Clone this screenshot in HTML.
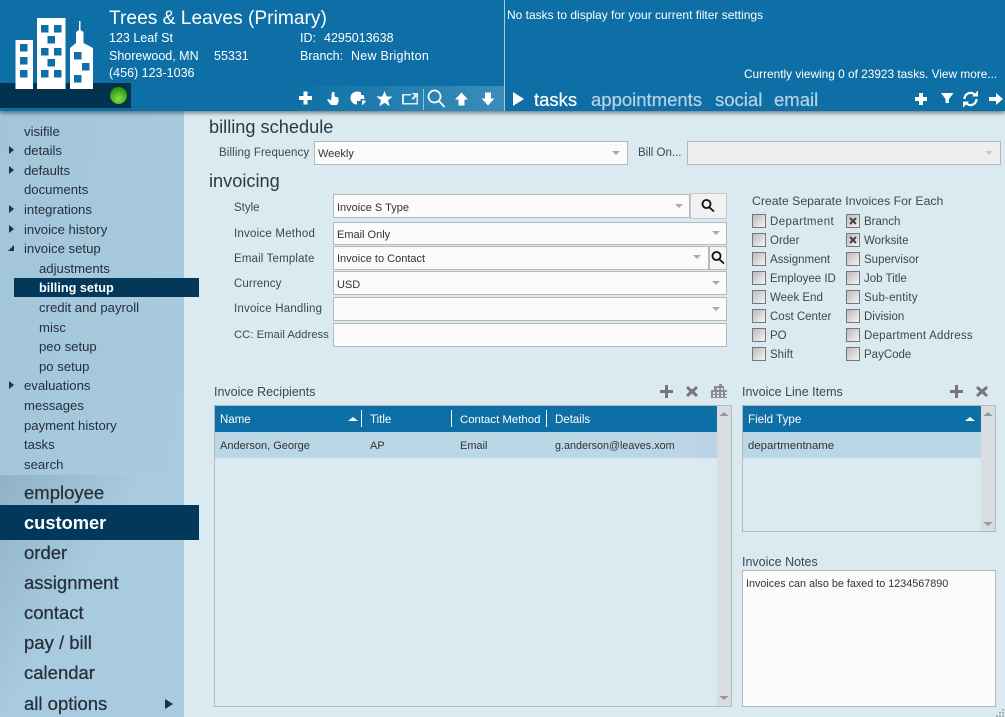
<!DOCTYPE html>
<html><head><meta charset="utf-8"><style>
html,body{margin:0;padding:0}
body{width:1005px;height:717px;overflow:hidden;position:relative;background:#dbe9f1;font-family:"Liberation Sans",sans-serif;color:#333}
div,span,svg{position:absolute}
.t{white-space:nowrap;line-height:16px;font-size:11.5px;color:#333}
.w{color:#fff;font-size:12.5px}
.m{color:#24303a;font-size:13.15px;left:24px}
.s{left:39px}
.b{color:#25303a;font-size:18.5px;left:24px;line-height:24px;-webkit-text-stroke:.25px #25303a}
.ar{left:9px;width:0;height:0;border-left:5px solid #25303a;border-top:4.5px solid transparent;border-bottom:4.5px solid transparent}
.h{font-size:18.2px;color:#2c3a44}
.in{background:#fbfbfb;border:1px solid #b5b9bb;box-sizing:border-box}
.ca{width:0;height:0;border-top:4px solid #aaa;border-left:4.5px solid transparent;border-right:4.5px solid transparent}
.cb{width:14px;height:14px;box-sizing:border-box;border:1px solid #777;background:linear-gradient(135deg,#bbb,#f4f4f4)}
.l{color:#3c4850;font-size:11.5px}
.x{color:#333;font-size:11px}
.tab{font-size:18.5px;color:#b9d3e2;line-height:24px;white-space:nowrap;-webkit-text-stroke:.2px currentColor}
</style></head><body>
<!-- sidebar -->
<div style="left:0;top:111px;width:184px;height:606px;background:linear-gradient(100deg,#a2c5da,#a9cce0)"></div>
<div style="left:0;top:475px;width:184px;height:242px;background:linear-gradient(120deg,#8fb2c6 0,#a9cbdf 45%)"></div>
<!-- header -->
<div style="left:0;top:0;width:1005px;height:111px;background:#0d6fa5;box-shadow:0 2px 4px rgba(40,50,60,.6)"></div>
<div style="left:0;top:83px;width:131px;height:25px;background:#03324f"></div>
<div style="left:290px;top:86px;width:214px;height:25px;background:linear-gradient(90deg,#0d6fa5,#3a8db9)"></div>
<div style="left:504px;top:0;width:1px;height:111px;background:#a8c8dc"></div>
<svg style="left:14px;top:18px" width="82" height="72" viewBox="0 0 82 72">
<path fill="#fff" d="M1.500 22H19V71H1.500zM23 0H51.500V71H23zM56 71V30L62 25V14L65 12V3H66.500V12L69.500 14V25L79 30V71z"/>
<g fill="#0d6fa5"><rect x="6" y="26" width="7.500" height="7.500"/><rect x="6" y="39" width="7.500" height="7.500"/><rect x="6" y="52" width="7.500" height="7.500"/><rect x="27" y="7" width="7.500" height="7.500"/><rect x="40" y="7" width="7.500" height="7.500"/><rect x="33.500" y="18" width="7.500" height="7.500"/><rect x="27" y="30" width="7.500" height="7.500"/><rect x="40" y="30" width="7.500" height="7.500"/><rect x="33.500" y="41" width="7.500" height="7.500"/><rect x="27" y="52" width="7.500" height="7.500"/><rect x="40" y="52" width="7.500" height="7.500"/><rect x="60" y="34" width="7.500" height="7.500"/><rect x="68" y="45" width="7.500" height="7.500"/><rect x="60" y="57" width="7.500" height="7.500"/></g>
</svg>
<div style="left:110px;top:87px;width:17px;height:17px;border-radius:50%;background:radial-gradient(circle at 50% 70%,#8ce04a,#2a9a10 70%)"></div>
<div class="t" style="left:109px;top:7px;font-size:19.2px;line-height:24px;color:#fff">Trees &amp; Leaves (Primary)</div>
<div class="t w" style="left:109px;top:30px">123 Leaf St</div>
<div class="t w" style="left:109px;top:48px">Shorewood, MN</div>
<div class="t w" style="left:214px;top:48px">55331</div>
<div class="t w" style="left:109px;top:65px">(456) 123-1036</div>
<div class="t w" style="left:300px;top:30px">ID:</div>
<div class="t w" style="left:324px;top:30px">4295013638</div>
<div class="t w" style="left:300px;top:48px">Branch:</div>
<div class="t w" style="left:351px;top:48px;letter-spacing:.25px">New Brighton</div>
<div class="t" style="left:507px;top:7px;color:#fff;font-size:12px">No tasks to display for your current filter settings</div>
<div class="t" style="left:744px;top:66px;color:#fff;font-size:11.85px">Currently viewing 0 of 23923 tasks. View more...</div>
<svg style="left:296px;top:86px" width="205" height="25" viewBox="0 0 205 25" fill="#fff">
<path d="M7.500 5.500h4v4.500h4.500v4h-4.500v4.500h-4v-4.500H3v-4h4.500z"/>
<path d="M36 6h2.500v4.500l4 1V16l-1.500 3h-6l-4-5 1.500-1 2.500 1.500z"/>
<path d="M61 5.500a6.500 6.500 0 1 0 0 13v-3.500h3.500v-2h4a7 7 0 0 0-1-4h-2.500v-2.500a7 7 0 0 0-4-1zM66 14.500h3.500v1.500l-3 3h-.5z"/>
<path d="M88.500 5l2.200 5.500h6l-4.700 3.800 1.700 6-5.200-3.500-5.200 3.500 1.700-6-4.700-3.800h6z"/>
<path opacity=".85" d="M106 8h9v1.500h-7v7.500h12.500v-5h1.500v6.500h-16zM115.500 7h6.500v6l-2-2-3 3-1.500-1.500 3-3z"/>
<rect x="127" y="3" width="1" height="21" opacity=".5"/>
<path fill="none" stroke="#fff" stroke-width="1.700" d="M138.500 4.500a6 6 0 1 0 .01 0zM143 15l5.500 6"/>
<path d="M165.500 6.500l6.500 7h-3.500v6h-6v-6H159zM192 19.500l-6.500-7h3.500v-6h6v6h3.500z"/>
</svg>
<svg style="left:510px;top:90px" width="16" height="18"><path fill="#fff" d="M3 2l11 7-11 7z"/></svg>
<div class="tab" style="left:534px;top:88px;color:#fff">tasks</div>
<div class="tab" style="left:591px;top:88px">appointments</div>
<div class="tab" style="left:715px;top:88px">social</div>
<div class="tab" style="left:774px;top:88px">email</div>
<svg style="left:910px;top:88px" width="95" height="22" viewBox="0 0 95 22" fill="#fff">
<path d="M9 5h4v4h4v4h-4v4H9v-4H5V9h4z"/>
<path d="M31 5h12.500l-4.500 6v4h-3.500v-4z"/>
<path fill="none" stroke="#fff" stroke-width="2.300" d="M54.500 11a6 6 0 0 1 10.500-4M66.500 11a6 6 0 0 1-10.500 4"/>
<path d="M62 8.500h6v-6zM59 13.500h-6v6z"/>
<path d="M79 9h7V5l7 6-7 6v-4h-7z"/>
</svg>
<!-- sidebar menu -->
<div class="t m" style="top:124px">visifile</div>
<div class="t m" style="top:143px">details</div><div class="ar" style="top:146px"></div>
<div class="t m" style="top:163px">defaults</div><div class="ar" style="top:166px"></div>
<div class="t m" style="top:182px">documents</div>
<div class="t m" style="top:202px">integrations</div><div class="ar" style="top:205px"></div>
<div class="t m" style="top:222px">invoice history</div><div class="ar" style="top:225px"></div>
<div class="t m" style="top:241px">invoice setup</div>
<svg style="left:7px;top:244px" width="8" height="8"><path fill="#25303a" d="M7 1v6H1z"/></svg>
<div class="t m s" style="top:261px">adjustments</div>
<div style="left:14px;top:278px;width:185px;height:19px;background:#03385a"></div>
<div class="t m s" style="top:280px;color:#fff;font-weight:bold;font-size:12.7px">billing setup</div>
<div class="t m s" style="top:300px">credit and payroll</div>
<div class="t m s" style="top:320px">misc</div>
<div class="t m s" style="top:339px">peo setup</div>
<div class="t m s" style="top:359px">po setup</div>
<div class="t m" style="top:378px">evaluations</div><div class="ar" style="top:381px"></div>
<div class="t m" style="top:398px">messages</div>
<div class="t m" style="top:418px">payment history</div>
<div class="t m" style="top:437px">tasks</div>
<div class="t m" style="top:457px">search</div>
<div style="left:0;top:505px;width:199px;height:35px;background:#03385a"></div>
<div class="t b" style="top:481px">employee</div>
<div class="t b" style="top:511px;color:#fff;font-weight:bold;-webkit-text-stroke:0;font-size:18.3px">customer</div>
<div class="t b" style="top:541px">order</div>
<div class="t b" style="top:571px">assignment</div>
<div class="t b" style="top:601px">contact</div>
<div class="t b" style="top:631px">pay / bill</div>
<div class="t b" style="top:661px">calendar</div>
<div class="t b" style="top:692px">all options</div>
<svg style="left:164px;top:698px" width="10" height="12"><path fill="#25303a" d="M1 1l8 5-8 5z"/></svg>
<!-- billing schedule -->
<div class="t h" style="left:209px;top:119px">billing schedule</div>
<div class="t l" style="left:219px;top:145px;letter-spacing:.12px">Billing Frequency</div>
<div class="in" style="left:314px;top:141px;width:314px;height:24px"></div>
<div class="t x" style="left:318px;top:146px">Weekly</div>
<div class="ca" style="left:612px;top:151px"></div>
<div class="t l" style="left:638px;top:145px">Bill On...</div>
<div class="in" style="left:687px;top:141px;width:314px;height:24px;background:#eee"></div>
<div class="ca" style="left:985px;top:151px;border-top-color:#ccc"></div>
<!-- invoicing -->
<div class="t h" style="left:209px;top:173px">invoicing</div>
<div class="t l" style="left:234px;top:200px">Style</div>
<div class="in" style="left:333px;top:194px;width:357px;height:24px"></div>
<div class="t x" style="left:337px;top:200px">Invoice S Type</div>
<div class="ca" style="left:675px;top:204px"></div>
<div style="left:690px;top:193px;width:37px;height:26px;box-sizing:border-box;background:#f1f1f1;border:1px solid #c4c8ca;border-radius:2px"></div>
<svg style="left:700px;top:198px" width="16" height="16"><path fill="none" stroke="#111" stroke-width="1.800" d="M6.500 2a4 4 0 1 0 .01 0zM9.500 9.500L14 13.500"/></svg>
<div class="t l" style="left:234px;top:226px;letter-spacing:.22px">Invoice Method</div>
<div class="in" style="left:333px;top:222px;width:394px;height:23px"></div>
<div class="t x" style="left:337px;top:227px">Email Only</div>
<div class="ca" style="left:712px;top:231px"></div>
<div class="t l" style="left:234px;top:251px;letter-spacing:.15px">Email Template</div>
<div class="in" style="left:333px;top:246px;width:376px;height:24px"></div>
<div class="t x" style="left:337px;top:251px">Invoice to Contact</div>
<div class="ca" style="left:693px;top:255px"></div>
<div style="left:709px;top:246px;width:18px;height:24px;box-sizing:border-box;background:#f6f6f6;border:1px solid #b5b9bb"></div>
<svg style="left:710px;top:250px" width="16" height="16"><path fill="none" stroke="#111" stroke-width="1.800" d="M6.500 2a4 4 0 1 0 .01 0zM9.500 9.500L14 13.500"/></svg>
<div class="t l" style="left:234px;top:276px;letter-spacing:.1px">Currency</div>
<div class="in" style="left:333px;top:271px;width:394px;height:24px"></div>
<div class="t x" style="left:337px;top:277px">USD</div>
<div class="ca" style="left:712px;top:281px"></div>
<div class="t l" style="left:234px;top:301px;letter-spacing:.2px">Invoice Handling</div>
<div class="in" style="left:333px;top:297px;width:394px;height:24px"></div>
<div class="ca" style="left:712px;top:307px"></div>
<div class="t l" style="left:234px;top:327px;font-size:11.3px">CC: Email Address</div>
<div class="in" style="left:333px;top:323px;width:394px;height:24px"></div>
<!-- checks -->
<div class="t l" style="left:752px;top:193px;font-size:12.25px">Create Separate Invoices For Each</div>
<div class="cb" style="left:752px;top:214px"></div><div class="t l" style="left:770px;top:214px;letter-spacing:.4px">Department</div>
<div class="cb" style="left:752px;top:233px"></div><div class="t l" style="left:770px;top:233px">Order</div>
<div class="cb" style="left:752px;top:252px"></div><div class="t l" style="left:770px;top:252px">Assignment</div>
<div class="cb" style="left:752px;top:271px"></div><div class="t l" style="left:770px;top:271px">Employee ID</div>
<div class="cb" style="left:752px;top:290px"></div><div class="t l" style="left:770px;top:290px">Week End</div>
<div class="cb" style="left:752px;top:309px"></div><div class="t l" style="left:770px;top:309px">Cost Center</div>
<div class="cb" style="left:752px;top:328px"></div><div class="t l" style="left:770px;top:328px">PO</div>
<div class="cb" style="left:752px;top:347px"></div><div class="t l" style="left:770px;top:347px">Shift</div>
<div class="cb" style="left:846px;top:214px"></div><div class="t l" style="left:864px;top:214px">Branch</div>
<div class="cb" style="left:846px;top:233px"></div><div class="t l" style="left:864px;top:233px">Worksite</div>
<svg style="left:846px;top:214px" width="14" height="33"><path stroke="#444" stroke-width="2" d="M4 4l6 6M10 4l-6 6M4 23l6 6M10 23l-6 6"/></svg>
<div class="cb" style="left:846px;top:252px"></div><div class="t l" style="left:864px;top:252px">Supervisor</div>
<div class="cb" style="left:846px;top:271px"></div><div class="t l" style="left:864px;top:271px">Job Title</div>
<div class="cb" style="left:846px;top:290px"></div><div class="t l" style="left:864px;top:290px;letter-spacing:.2px">Sub-entity</div>
<div class="cb" style="left:846px;top:309px"></div><div class="t l" style="left:864px;top:309px">Division</div>
<div class="cb" style="left:846px;top:328px"></div><div class="t l" style="left:864px;top:328px;letter-spacing:.22px">Department Address</div>
<div class="cb" style="left:846px;top:347px"></div><div class="t l" style="left:864px;top:347px">PayCode</div>
<!-- recipients -->
<div class="t l" style="left:214px;top:384px;font-size:12.5px">Invoice Recipients</div>
<svg style="left:658px;top:383px" width="70" height="17" fill="#777"><path d="M7 2h3v5h5v3h-5v5H7v-5H2V7h5z"/><path d="M30 3l4 3.500L38 3l2 2-3.500 3.500L40 12l-2 2-4-3.500L30 14l-2-2 3.500-3.500L28 5z"/><path d="M53 15V7h3V3h5V1h3v2h2v4h3v8z" opacity=".8"/><g fill="#dbe9f1"><rect x="55" y="9" width="2" height="2"/><rect x="59" y="5" width="2" height="2"/><rect x="59" y="9" width="2" height="2"/><rect x="63" y="5" width="2" height="2"/><rect x="63" y="9" width="2" height="2"/><rect x="67" y="9" width="2" height="2"/><rect x="55" y="12" width="2" height="2"/><rect x="59" y="12" width="2" height="2"/><rect x="63" y="12" width="2" height="2"/><rect x="67" y="12" width="2" height="2"/></g></svg>
<div style="left:214px;top:405px;width:518px;height:302px;box-sizing:border-box;border:1px solid #b5b9bb"></div>
<div style="left:215px;top:406px;width:502px;height:26px;background:#0d6fa5"></div>
<div style="left:215px;top:432px;width:502px;height:26px;background:linear-gradient(90deg,#bad7e6 85%,#bcd2e6)"></div>
<div style="left:717px;top:406px;width:14px;height:300px;background:#d7dde1"></div>
<div style="left:719px;top:412px;width:0;height:0;border-bottom:4px solid #999;border-left:5px solid transparent;border-right:5px solid transparent"></div>
<div style="left:719px;top:696px;width:0;height:0;border-top:4px solid #999;border-left:5px solid transparent;border-right:5px solid transparent"></div>
<div class="t" style="left:220px;top:412px;color:#fff;font-size:11.5px">Name</div>
<div style="left:348px;top:417px;width:0;height:0;border-bottom:4px solid #fff;border-left:5px solid transparent;border-right:5px solid transparent"></div>
<div style="left:361px;top:410px;width:1px;height:17px;background:#fff"></div>
<div class="t" style="left:370px;top:412px;color:#fff;font-size:11.5px">Title</div>
<div style="left:451px;top:410px;width:1px;height:17px;background:#fff"></div>
<div class="t" style="left:460px;top:412px;color:#fff;font-size:11.4px">Contact Method</div>
<div style="left:546px;top:410px;width:1px;height:17px;background:#fff"></div>
<div class="t" style="left:555px;top:412px;color:#fff;font-size:11.5px">Details</div>
<div class="t x" style="left:220px;top:438px">Anderson, George</div>
<div class="t x" style="left:370px;top:438px">AP</div>
<div class="t x" style="left:460px;top:438px">Email</div>
<div class="t x" style="left:555px;top:438px;font-size:10.8px">g.anderson@leaves.xom</div>
<!-- line items -->
<div class="t l" style="left:742px;top:384px;font-size:12.5px">Invoice Line Items</div>
<svg style="left:948px;top:383px" width="46" height="17" fill="#777"><path d="M7 2h3v5h5v3h-5v5H7v-5H2V7h5z"/><path d="M30 3l4 3.500L38 3l2 2-3.500 3.500L40 12l-2 2-4-3.500L30 14l-2-2 3.500-3.500L28 5z"/></svg>
<div style="left:742px;top:405px;width:254px;height:127px;box-sizing:border-box;border:1px solid #b5b9bb"></div>
<div style="left:743px;top:406px;width:238px;height:26px;background:#0d6fa5"></div>
<div style="left:743px;top:432px;width:238px;height:26px;background:#bad7e6"></div>
<div style="left:981px;top:406px;width:14px;height:125px;background:#d7dde1"></div>
<div style="left:983px;top:412px;width:0;height:0;border-bottom:4px solid #999;border-left:5px solid transparent;border-right:5px solid transparent"></div>
<div style="left:983px;top:522px;width:0;height:0;border-top:4px solid #999;border-left:5px solid transparent;border-right:5px solid transparent"></div>
<div class="t" style="left:748px;top:412px;color:#fff;font-size:11.6px">Field Type</div>
<div style="left:965px;top:417px;width:0;height:0;border-bottom:4px solid #fff;border-left:5px solid transparent;border-right:5px solid transparent"></div>
<div class="t x" style="left:748px;top:438px;font-size:11.4px">departmentname</div>
<!-- notes -->
<div class="t l" style="left:742px;top:554px;font-size:12.5px">Invoice Notes</div>
<div class="in" style="left:742px;top:570px;width:254px;height:137px"></div>
<div class="t x" style="left:746px;top:576px;font-size:10.8px">Invoices can also be faxed to 1234567890</div>
<svg style="left:996px;top:708px" width="9" height="9"><path fill="#aab4ba" d="M6 1h2v2H6zM3 4h2v2H3zM6 4h2v2H6zM0 7h2v2H0zM3 7h2v2H3zM6 7h2v2H6z"/></svg>
</body></html>
